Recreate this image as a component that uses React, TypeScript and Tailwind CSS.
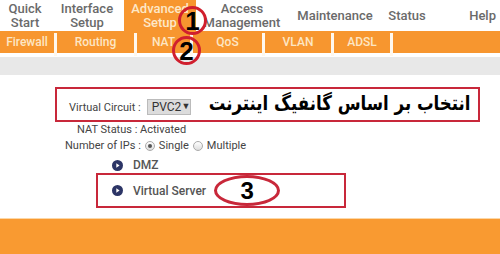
import React from "react";

const font = { fontFamily: "Roboto, 'Liberation Sans', sans-serif" };

function Arrow() {
  return (
    <svg width="11" height="11" viewBox="0 0 11 11" className="shrink-0">
      <circle cx="5.5" cy="5.5" r="5.5" fill="#2c3566" />
      <path d="M4.3 3.2 L7.6 5.5 L4.3 7.8 Z" fill="#fff" />
    </svg>
  );
}

function Radio({ checked }: { checked?: boolean }) {
  return (
    <span className="w-[10px] h-[10px] rounded-full border border-[#aaa] bg-gradient-to-b from-[#fff] to-[#ddd] flex items-center justify-center">
      {checked && <span className="w-[4px] h-[4px] rounded-full bg-[#555]" />}
    </span>
  );
}

function Sep() {
  return <div className="w-[3px] self-stretch bg-[#fff8ee] mt-[2px] -mb-[3px]" />;
}

export default function App() {
  return (
    <div className="relative w-[500px] h-[254px] overflow-hidden bg-white whitespace-nowrap" style={font}>
      {/* Main nav */}
      <div className="flex h-[31px] text-[13px] leading-[14px] font-medium text-[#6a6a6a] text-center">
        <div className="w-[50px] flex items-center justify-center">Quick<br />Start</div>
        <div className="w-[74px] flex items-center justify-center">Interface<br />Setup</div>
        <div className="w-[72px] flex items-center justify-center bg-[#f7962f] text-[#fde8c8]">Advanced<br />Setup</div>
        <div className="w-[92px] flex items-center justify-center">Access<br />Management</div>
        <div className="w-[94px] flex items-center justify-center">Maintenance</div>
        <div className="w-[50px] flex items-center justify-center">Status</div>
        <div className="flex-1 flex items-center justify-end pr-[4px]">Help</div>
      </div>

      {/* Sub nav */}
      <div className="flex h-[22px] bg-[#f7962f] text-[12px] text-[#fde6c4] font-medium">
        <div className="w-[54px] flex items-center justify-center">Firewall</div>
        <Sep />
        <div className="w-[77px] flex items-center justify-center">Routing</div>
        <Sep />
        <div className="w-[53px] flex items-center justify-center">NAT</div>
        <Sep />
        <div className="w-[69px] flex items-center justify-center">QoS</div>
        <Sep />
        <div className="w-[66px] flex items-center justify-center">VLAN</div>
        <Sep />
        <div className="w-[56px] flex items-center justify-center">ADSL</div>
        <Sep />
        <div className="flex-1" />
      </div>

      <div className="h-[4px]" />
      <div className="h-[18px] bg-[#e8e8e8]" />

      {/* Content */}
      <div className="h-[143px] pt-[12px] text-[11px] text-[#444]">
        <div className="ml-[55px] w-[425px] h-[35px] border-2 border-[#c8283a] flex items-center pl-[12px] pr-[8px]">
          <span className="mt-[8px]">Virtual Circuit :</span>
          <span className="ml-[6px] mt-[4px] h-[16px] w-[44px] bg-[#dcdcdc] border border-[#bbb] flex items-center justify-between pl-[4px] pr-[5px] text-[12px] text-[#333]">
            PVC2 <span className="text-[9px]">▼</span>
          </span>
          <div className="flex-1 min-w-0 flex justify-end">
            <span
              dir="rtl"
              className="shrink-0 text-[20px] font-bold text-black leading-none -mt-[4px] scale-x-[0.83] origin-right"
              style={{ fontFamily: "'DejaVu Sans', sans-serif" }}
            >
              انتخاب بر اساس گانفیگ اینترنت
            </span>
          </div>
        </div>

        <div className="ml-[77px] mt-[1px] h-[13px] leading-[13px]">NAT Status : Activated</div>

        <div className="ml-[65px] mt-[3px] h-[14px] flex items-center gap-[4px] leading-[14px]">
          <span>Number of IPs :</span>
          <Radio checked />
          <span>Single</span>
          <Radio />
          <span>Multiple</span>
        </div>

        <div className="ml-[112px] mt-[5px] h-[14px] flex items-center gap-[10px] text-[12px] font-medium text-[#555]">
          <Arrow />
          <span>DMZ</span>
        </div>

        <div className="ml-[96px] mt-[1px] w-[250px] h-[35px] border-2 border-[#c8283a] flex items-center pl-[14px]">
          <Arrow />
          <span className="ml-[10px] text-[12px] font-medium text-[#555]">Virtual Server</span>
          <div
            className="ml-[8px] w-[66px] h-[31px] rounded-[50%] border-[3px] border-[#c8283a] flex items-center justify-center text-[24px] font-bold text-black"
            style={{ fontFamily: "'Liberation Sans', Arial, sans-serif" }}
          >
            3
          </div>
        </div>
      </div>

      {/* Footer */}
      <div className="h-[36px] bg-[#f99a31] border-t border-[#fcd7a6]" />

      {/* Annotation circles */}
      <div
        className="absolute left-[178px] top-[6px] w-[29px] h-[29px] rounded-full border-[3px] border-[#d01f2e] flex items-center justify-center text-[26px] font-bold text-black leading-none"
        style={{ fontFamily: "'Liberation Sans', Arial, sans-serif" }}
      >
        1
      </div>
      <div
        className="absolute left-[172px] top-[36px] w-[29px] h-[29px] rounded-full border-[3px] border-[#d01f2e] flex items-center justify-center text-[26px] font-bold text-black leading-none"
        style={{ fontFamily: "'Liberation Sans', Arial, sans-serif" }}
      >
        2
      </div>
    </div>
  );
}
